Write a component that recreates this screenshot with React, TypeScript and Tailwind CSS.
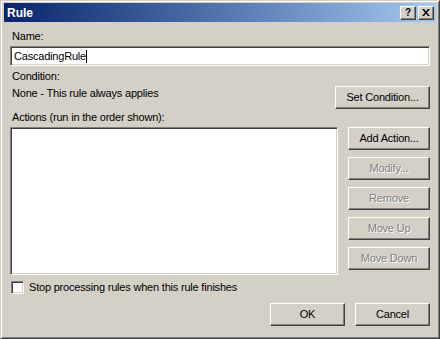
import React from "react";

const raised =
  "border border-t-white border-l-white border-r-[#404040] border-b-[#404040] shadow-[inset_-1px_-1px_0_#808080,inset_1px_1px_0_#d4d0c8]";
const sunken =
  "border border-t-[#808080] border-l-[#808080] border-r-white border-b-white shadow-[inset_1px_1px_0_#404040,inset_-1px_-1px_0_#d4d0c8]";

function Btn({ label, disabled, w }: { label: string; disabled?: boolean; w: string }) {
  return (
    <div
      className={`${raised} ${w} h-[23px] bg-[#d4d0c8] flex items-center justify-center text-[11px] tracking-[-0.2px] ${
        disabled ? "text-[#808080] [text-shadow:1px_1px_0_#ffffff]" : "text-black"
      }`}
    >
      {label}
    </div>
  );
}

export default function App() {
  return (
    <div
      className="w-[440px] h-[339px] bg-[#d4d0c8] border border-t-[#d4d0c8] border-l-[#d4d0c8] border-r-[#404040] border-b-[#404040] shadow-[inset_1px_1px_0_#ffffff,inset_-1px_-1px_0_#808080] p-[2px] flex flex-col text-black"
      style={{ fontFamily: '"Liberation Sans", Arial, sans-serif' }}
    >
      {/* title bar */}
      <div className="h-[19px] mx-px bg-gradient-to-r from-[#0a246a] to-[#a6caf0] flex items-center pl-[3px] pr-[2px]">
        <span className="text-white font-bold text-[12px] flex-1">Rule</span>
        <div className="flex items-center">
          <div className={`${raised} w-[16px] h-[14px] bg-[#d4d0c8] flex items-center justify-center text-[10px] font-bold leading-none`}>?</div>
          <div className={`${raised} w-[16px] h-[14px] ml-[2px] bg-[#d4d0c8] flex items-center justify-center`}>
            <svg width="8" height="7" viewBox="0 0 8 7">
              <path d="M0 0h2l2 2.5L6 0h2L5 3.5 8 7H6L4 4.5 2 7H0l3-3.5z" fill="#000" />
            </svg>
          </div>
        </div>
      </div>

      {/* body */}
      <div className="flex flex-col px-[7px] pt-[8px] text-[11px] leading-[13px] tracking-[-0.2px]">
        <div className="pl-[2px]">Name:</div>
        <div className={`${sunken} mt-[3px] h-[20px] bg-white flex items-center pl-[3px]`}>
          <span>CascadingRule</span>
          <span className="w-px h-[13px] bg-black" />
        </div>
        <div className="pl-[2px] mt-[4px]">Condition:</div>
        <div className="flex items-start mt-[3px]">
          <div className="flex-1 pl-[2px] mt-[1px]">None - This rule always applies</div>
          <div>
            <Btn label="Set Condition..." w="w-[95px]" />
          </div>
        </div>
        <div className="pl-[2px] mt-[2px]">Actions (run in the order shown):</div>
        <div className="flex mt-[3px]">
          <div className={`${sunken} w-[328px] h-[148px] bg-white`} />
          <div className="flex flex-col gap-[7px] ml-[10px]">
            <Btn label="Add Action..." w="w-[82px]" />
            <Btn label="Modify..." w="w-[82px]" disabled />
            <Btn label="Remove" w="w-[82px]" disabled />
            <Btn label="Move Up" w="w-[82px]" disabled />
            <Btn label="Move Down" w="w-[82px]" disabled />
          </div>
        </div>
        <div className="flex items-center mt-[6px]">
          <div className={`${sunken} w-[13px] h-[13px] bg-white ml-[1px]`} />
          <span className="ml-[5px]">Stop processing rules when this rule finishes</span>
        </div>
        <div className="flex justify-end gap-[10px] mt-[9px]">
          <Btn label="OK" w="w-[75px]" />
          <Btn label="Cancel" w="w-[75px]" />
        </div>
      </div>
    </div>
  );
}
